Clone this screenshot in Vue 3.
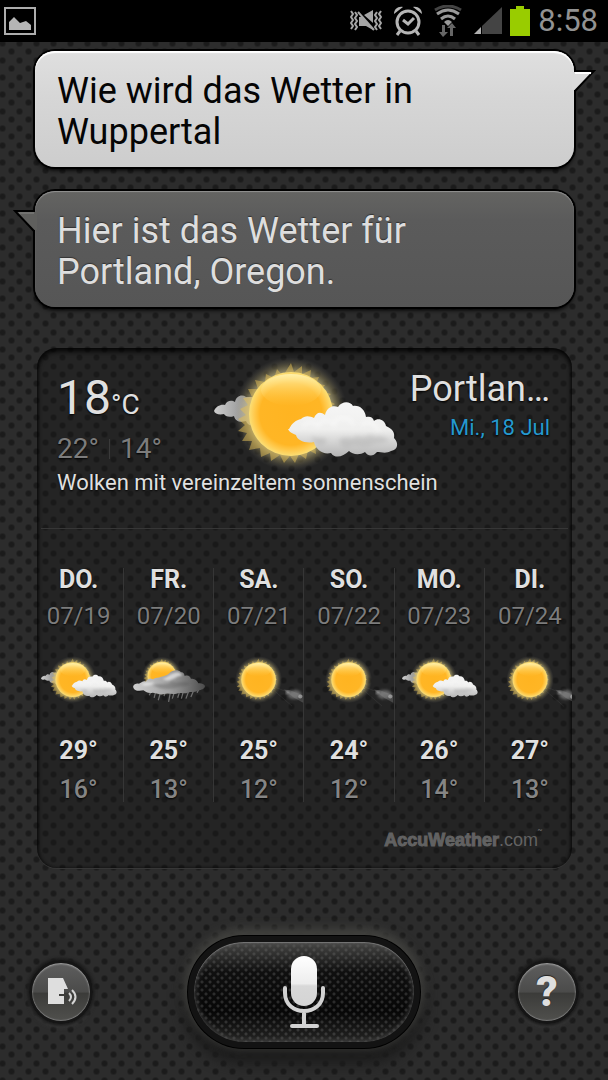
<template>
  <div class="screen">
    <svg class="defs" width="0" height="0" aria-hidden="true">
      <defs>
        <radialGradient id="glow">
          <stop offset="0.7" stop-color="#fff3b0" stop-opacity="0.6"/>
          <stop offset="0.85" stop-color="#e8d58a" stop-opacity="0.25"/>
          <stop offset="1" stop-color="#888" stop-opacity="0"/>
        </radialGradient>
        <radialGradient id="disc">
          <stop offset="0" stop-color="#ffb421"/>
          <stop offset="0.74" stop-color="#ffb625"/>
          <stop offset="0.88" stop-color="#ffcb50"/>
          <stop offset="1" stop-color="#fbdf76"/>
        </radialGradient>
        <linearGradient id="shine" x1="0" y1="0" x2="0" y2="1">
          <stop offset="0" stop-color="#fff3b0" stop-opacity="0.9"/>
          <stop offset="1" stop-color="#ffcf50" stop-opacity="0"/>
        </linearGradient>
        <linearGradient id="white" x1="0" y1="0" x2="0" y2="1">
          <stop offset="0" stop-color="#f6f6f6"/>
          <stop offset="0.5" stop-color="#efefee"/>
          <stop offset="1" stop-color="#b4b4b4"/>
        </linearGradient>
        <linearGradient id="grey" x1="0" y1="0" x2="1" y2="0">
          <stop offset="0" stop-color="#cfcfcf"/>
          <stop offset="1" stop-color="#7e7e7e"/>
        </linearGradient>
        <linearGradient id="rainy" x1="0" y1="0" x2="1" y2="0">
          <stop offset="0" stop-color="#cfcfcf"/>
          <stop offset="0.5" stop-color="#a2a2a2"/>
          <stop offset="1" stop-color="#4b4b4b"/>
        </linearGradient>
        <linearGradient id="mic" x1="0" y1="0" x2="0" y2="1">
          <stop offset="0" stop-color="#fff"/>
          <stop offset="0.55" stop-color="#ededed"/>
          <stop offset="0.6" stop-color="#d8d8d8"/>
          <stop offset="1" stop-color="#d4d4d4"/>
        </linearGradient>
        <filter id="soft" x="-20%" y="-20%" width="140%" height="140%"><feGaussianBlur stdDeviation="2"/></filter>
        <filter id="softer" x="-50%" y="-50%" width="200%" height="200%"><feGaussianBlur stdDeviation="4"/></filter>
      </defs>
      <symbol id="sun" viewBox="0 0 120 120" overflow="visible">
        <circle cx="60" cy="60" r="57" fill="url(#glow)"/>
        <path fill="#e3c058" opacity="0.5" d="M60 9l3 9 8-6 0 8 9-4-1 8 9-1-3 7 9 1-4 6 10 3-6 5 10 5-7 4 8 6-8 4 7 7-9 2 5 9-10 0 3 10-9-2 1 10-8-4-2 9-7-5-4 9-5-7-6 7-4-8-9 6-1-8-9 4-1-9-11 2 3-9-10 0 5-8-9-2 7-6-7-6 8-4-6-6 8-4-5-7 9-1-4-8 10 0-3-9 10 2 1-8 8 4 3-9 6 7z"/>
        <circle cx="60" cy="60" r="42" fill="url(#disc)"/>
        <ellipse cx="60" cy="36" rx="30" ry="16" fill="url(#shine)"/>
      </symbol>
      <symbol id="cloud" viewBox="0 0 108 54" overflow="visible">
        <path fill="url(#white)" d="M0 26c3-6 7-9 12-10 4-4 9-3 13-1 2-5 6-7 11-3 2-8 8-10 13-8 4-6 12-6 15-1 7-1 12 4 13 11 4-1 7 0 8 4 4-4 11-1 12 5 7 3 9 7 8 12 5 5 4 12-3 13-5 3-10 1-14 1-5 6-10 3-12 0-6 4-13 2-16-1-6 6-14 8-18 2-8 2-15-3-17-11-9 2-17-2-18-7-4-2-7-3-8-6z"/>
        <path fill="#a8a8a8" opacity="0.4" filter="url(#soft)" d="M50 37c8-6 13 2 18-5 6 6 13-4 18 2 5-2 10 0 14 3-4 4-12 2-18 5-9 4-15-2-22 2-5 2-9-2-10-7zM22 33c7 4 12 0 16 4-2 5-6 6-9 4-4-1-6-4-7-8z"/>
        <path fill="none" stroke="#fff" stroke-width="2" opacity="0.7" filter="url(#soft)" d="M14 24c5-7 12-5 15-1 5-8 12-6 16-1 2-9 14-10 20 0M72 22c8-6 15 0 18 6"/>
      </symbol>
      <symbol id="partly" viewBox="0 0 216 105" overflow="visible">
        <path fill="url(#grey)" d="M17 51c2-5 7-7 11-6 2-5 7-5 10-3 1-6 7-8 11-5h10v29c-6 0-9-2-10-5-6 2-11 0-12-5-5 2-9 0-10-2-5 1-9 0-10-3z"/>
        <use href="#sun" x="34" y="-6" width="120" height="120"/>
        <use href="#cloud" x="92" y="43" width="108" height="54"/>
      </symbol>
      <symbol id="rain" viewBox="0 0 216 105" overflow="visible">
        <use href="#sun" x="42" y="-4" width="100" height="100"/>
        <path stroke="#909090" stroke-width="3" opacity="0.7" d="M66 82l-5 10M76 86l-3 12M88 86l-5 18M100 84l-3 10M112 86l-4 22M122 84l-5 16M134 86l-4 12M144 82l-5 18M156 84l-6 16M168 82l-6 14M182 76l-5 10"/>
        <path fill="url(#rainy)" d="M22 71c2-7 9-8 14-7 6-2 10-8 17-5 4-7 10-10 17-6 6-4 14-3 20-6 8-1 14-4 19-8 8-8 20-11 29-3 7 0 8 5 9 9 8-3 14 1 15 7 9-2 16 4 18 11 10 0 17 4 16 8-3 8-12 7-18 10-8 5-16 2-22 4-11 5-20-1-29 3-11 3-20-3-30 1-12 3-19-3-28-3-11 2-18-3-22-6-10 2-23 2-25-9z"/>
        <path fill="#eee" opacity="0.7" filter="url(#soft)" d="M93 52c12-2 18-12 28-14 9-4 17 0 20 7-10-2-15 6-22 7-8 5-16 6-26 0zM42 66c12-8 20-3 30-6 0 8-20 12-30 6z"/>
        <path fill="#555" opacity="0.35" filter="url(#soft)" d="M70 68c20-8 30 2 46-10 16 8 28-6 44 6-12 10-24 4-36 10-20 4-34 4-54-6z"/>
      </symbol>
      <symbol id="sunny" viewBox="0 0 216 105" overflow="visible">
        <path stroke="#777" stroke-width="1" opacity="0.35" d="M145 80l44 38M147 72l36 14"/>
        <ellipse cx="195" cy="90" rx="17" ry="11" fill="#aaa" opacity="0.5" filter="url(#softer)"/>
        <path fill="#999" opacity="0.3" d="M168 78l16 2 32 12v18l-22-12z"/>
        <circle cx="178" cy="85" r="4" fill="#bbb" opacity="0.7" filter="url(#soft)"/>
        <circle cx="209" cy="95" r="5" fill="#bbb" opacity="0.6"/>
        <use href="#sun" x="48" y="-6" width="120" height="120"/>
      </symbol>
    </svg>

    <header class="status-bar">
      <svg class="status-picture" width="32" height="28" viewBox="0 0 32 28" role="img" aria-label="Bild">
        <rect x="1" y="1" width="30" height="26" fill="none" stroke="#adadad" stroke-width="2"/>
        <path fill="#b5b5b5" d="M5 23v-8l5-5 6 6 3-1 3-1 5 4v5z"/>
      </svg>
      <div class="status-icons">
        <svg width="32" height="24" viewBox="0 0 32 24" role="img" aria-label="Vibration">
          <path fill="none" stroke="#a5a5a5" stroke-width="2" d="M1 2l2 3-2 3 2 3-2 3 2 3-2 3M5 3l2 3-2 3 2 3-2 3 2 3-2 3M31 2l-2 3 2 3-2 3 2 3-2 3 2 3M27 3l-2 3 2 3-2 3 2 3-2 3 2 3"/>
          <path fill="#a5a5a5" d="M9 8h3l11 11v2l-7-4H9zM14 6l9-5v13z"/>
          <path stroke="#a5a5a5" stroke-width="2" d="M8 3l16 18"/>
        </svg>
        <svg width="28" height="30" viewBox="0 0 28 30" role="img" aria-label="Wecker">
          <circle cx="14" cy="16" r="11" fill="none" stroke="#b5b5b5" stroke-width="3"/>
          <path fill="none" stroke="#b5b5b5" stroke-width="3" d="M9 14l5 4 6-6M6 25l-3 4M22 25l3 4"/>
          <path fill="#b5b5b5" d="M0 8c0-5 4-8 9-7zM28 8c0-5-4-8-9-7z"/>
        </svg>
        <svg width="28" height="32" viewBox="0 0 28 32" role="img" aria-label="WLAN">
          <g fill="none" stroke-width="3">
            <path stroke="#444" d="M1 5q13-8 26 0"/>
            <path stroke="#999" d="M3 9q11-8 22 0"/>
            <path stroke="#999" d="M7 14q7-6 14 0"/>
          </g>
          <path fill="#999" d="M10 17q4-4 8 0l-4 4z"/>
          <path fill="#666" d="M8 20h3v7h3l-5 5-4-5h3zM16 31v-8h-3l5-5 4 5h-3v8z"/>
        </svg>
        <svg width="28" height="28" viewBox="0 0 28 28" role="img" aria-label="Signal">
          <path fill="#444" d="M8 19L28 0v27H8z"/>
          <path fill="#b0b0b0" d="M0 27l7-7v7z"/>
        </svg>
        <svg class="battery" width="20" height="30" viewBox="0 0 20 30" role="img" aria-label="Akku">
          <path fill="#99cc00" d="M6 0h8v3h6v27H0V3h6z"/>
        </svg>
        <span class="clock">8:58</span>
      </div>
    </header>

    <main class="conversation">
      <p class="bubble bubble-user">
        Wie wird das Wetter in Wuppertal
        <svg class="tail tail-right" width="24" height="24" viewBox="0 0 24 24" aria-hidden="true">
          <path fill="#dadada" d="M0 2h21L4 20H0z"/>
          <path fill="none" stroke="#000" stroke-width="2" d="M3 1h19L3 21"/>
          <path stroke="#fff" stroke-width="2" d="M3 3h16"/>
        </svg>
      </p>
      <p class="bubble bubble-reply">
        Hier ist das Wetter für Portland, Oregon.
        <svg class="tail tail-left" width="24" height="24" viewBox="0 0 24 24" aria-hidden="true">
          <path fill="#5f5f5d" d="M24 2H3l17 18h4z"/>
          <path fill="none" stroke="#000" stroke-width="2" d="M21 1H2l19 20"/>
          <path stroke="#858583" stroke-width="1" d="M21 3H6"/>
        </svg>
      </p>

      <section class="card" aria-label="Wetter">
        <div class="today">
          <div class="today-temp">
            <div class="now">18<span class="unit">°C</span></div>
            <div class="range"><span>22°</span><span class="range-line"></span><span>14°</span></div>
          </div>
          <svg class="today-icon" width="190" height="105" viewBox="13 0 190 105" aria-hidden="true">
            <use href="#partly" width="216" height="105"/>
          </svg>
          <div class="today-place">
            <h1 class="city">Portlan…</h1>
            <div class="date">Mi., 18 Jul</div>
          </div>
        </div>
        <p class="description">Wolken mit vereinzeltem sonnenschein</p>

        <ol class="forecast">
          <li v-for="day in days" :key="day.date" class="day">
            <span class="day-name">{{ day.name }}</span>
            <span class="day-date">{{ day.date }}</span>
            <svg class="day-icon" viewBox="0 0 216 105" aria-hidden="true">
              <use :href="'#' + day.icon" width="216" height="105"/>
            </svg>
            <span class="day-high">{{ day.high }}°</span>
            <span class="day-low">{{ day.low }}°</span>
          </li>
        </ol>
        <div class="brand"><b>AccuWeather</b><span>.com</span><sup>˜</sup></div>
      </section>
    </main>

    <footer class="controls">
      <button class="round" type="button" aria-label="Sprachausgabe">
        <svg width="32" height="30" viewBox="0 0 32 30" aria-hidden="true">
          <path fill="#dedede" d="M3 1h15l5 11h-4v5h-5v2h5v8H3z"/>
          <path fill="none" stroke="#d5d5d5" stroke-width="2" d="M24 16q4 4 0 8M27 13q7 7 0 14"/>
        </svg>
      </button>
      <button class="mic" type="button" aria-label="Sprechen">
        <svg width="42" height="74" viewBox="0 0 42 74" aria-hidden="true">
          <rect x="8" y="1" width="26" height="50" rx="13" fill="url(#mic)"/>
          <path fill="none" stroke="#d2d2d2" stroke-width="4" stroke-linecap="round" d="M2 33v5c0 24 38 24 38 0v-5M21 57v13M9 71h25"/>
        </svg>
      </button>
      <button class="round help" type="button" aria-label="Hilfe">?</button>
    </footer>
  </div>
</template>

<script setup>
const days = [
  { name: 'DO.', date: '07/19', icon: 'partly', high: 29, low: 16 },
  { name: 'FR.', date: '07/20', icon: 'rain', high: 25, low: 13 },
  { name: 'SA.', date: '07/21', icon: 'sunny', high: 25, low: 12 },
  { name: 'SO.', date: '07/22', icon: 'sunny', high: 24, low: 12 },
  { name: 'MO.', date: '07/23', icon: 'partly', high: 26, low: 14 },
  { name: 'DI.', date: '07/24', icon: 'sunny', high: 27, low: 13 }
]
</script>

<style>
body { margin:0; background:#2b2b2b; }
</style>

<style scoped>
.screen {
  min-height:100vh; display:flex; flex-direction:column; overflow:hidden;
  font-family:Roboto, "Noto Sans", sans-serif; color:#e0e0e0;
  background-color:#2c2c2c;
  background-image:
    radial-gradient(circle, #1b1b1b 2px, transparent 4px),
    radial-gradient(circle, #1b1b1b 2px, transparent 4px);
  background-size:17px 17px;
  background-position:-6px 1px, 3px 9px;
}
.defs { position:absolute; }
.status-bar { height:42px; background:#000; display:flex; align-items:center; justify-content:space-between; padding:0 10px 0 4px; }
.status-icons { display:flex; align-items:center; gap:12px; }
.battery { margin-left:-4px; }
.clock { font-size:31px; line-height:42px; color:#929292; margin-left:-4px; }

.conversation { flex:1; padding:9px 34px 0 35px; }
.bubble { position:relative; margin:0 0 24px; padding:20px 140px 14px 22px; border-radius:20px; font-size:36px; line-height:41px; }
.bubble-user { color:#050505; background:linear-gradient(#dfdfdf, #d6d6d6 40%, #cdcdcd); box-shadow:0 0 0 2px #000, inset 0 2px 1px #fff, 0 3px 4px #000; }
.bubble-reply { color:#dedede; background:linear-gradient(#646462, #5b5b5b 25%, #565656); box-shadow:0 0 0 2px #000, inset 0 1px 1px #929292, 0 3px 4px #000; text-shadow:0 -1px 1px #333; }
.tail { position:absolute; top:19px; }
.tail-right { right:-22px; }
.tail-left { left:-22px; }

.card {
  margin:41px 2px 0; padding-bottom:14px; border-radius:20px; overflow:hidden;
  background:rgba(24,24,24,0.35);
  box-shadow:inset 0 4px 5px rgba(0,0,0,0.75), inset 2px 0 3px rgba(0,0,0,0.35), inset -2px 0 3px rgba(0,0,0,0.35), 0 1px 0 #363636;
}
.today { display:flex; justify-content:space-between; padding:12px 22px 0 20px; text-shadow:0 1px 2px #000; }
.today-temp { width:153px; padding-top:10px; }
.now { font-size:48px; line-height:56px; }
.unit { font-size:28px; }
.range { display:flex; align-items:center; font-size:28px; line-height:32px; color:#7c7c7c; }
.range-line { width:1px; height:20px; margin:0 10px; background:#3a3a3a; }
.today-icon { flex:none; overflow:visible; }
.today-place { flex:1; padding-top:8px; text-align:right; white-space:nowrap; }
.city { margin:0; font-size:36px; line-height:42px; font-weight:400; }
.date { font-size:22px; line-height:36px; color:#2599cf; }
.description { margin:3px 4px 0; padding:0 16px 30px; font-size:22px; line-height:30px; border-bottom:1px solid #363636; text-shadow:0 1px 2px #000; }

.forecast { list-style:none; margin:39px -3px 0; padding:0; display:grid; grid-template-columns:repeat(6, 1fr); }
.day { display:flex; flex-direction:column; align-items:center; border-right:1px solid #363636; font-size:25px; line-height:28px; text-shadow:0 1px 2px #000; }
.day:last-child { border-right:0; }
.day-name { font-weight:700; line-height:24px; margin-bottom:10px; }
.day-date { font-size:24px; color:#7c7c7c; }
.day-icon { flex:none; width:100%; height:44px; margin:27px 0 36px; overflow:visible; }
.day-high { font-weight:700; margin-bottom:13px; }
.day-low { line-height:24px; color:#858585; font-weight:500; }
.brand { margin:24px 30px 0; text-align:right; font-family:"Liberation Sans", Arial, sans-serif; font-size:18px; line-height:28px; color:#626262; }
.brand b { -webkit-text-stroke:1px #626262; }
.brand sup { font-size:12px; line-height:1px; }

.controls { display:flex; align-items:center; justify-content:space-between; padding:0 29px 32px 29px; }
button { border:0; padding:0; font-family:inherit; cursor:pointer; display:flex; align-items:center; justify-content:center; }
.round {
  width:64px; height:64px; border-radius:50%; border:3px solid #151515;
  background:linear-gradient(#5e5e5e, #4b4b4a 50%, #3b3b39 52%, #50504d);
  box-shadow:inset 0 1px 2px #aaa, inset 0 -1px 1px #777, 0 0 3px 2px #1b1b1b, 0 3px 4px #444;
}
.help { font-size:42px; line-height:48px; font-weight:900; color:#dedede; text-shadow:0 -1px 1px #222; }
.mic {
  width:232px; height:112px; border-radius:56px; border:6px solid #131313;
  background:
    linear-gradient(rgba(90,90,88,0.75), rgba(20,20,20,0.4) 30%, rgba(0,0,0,0.4) 70%, rgba(60,60,58,0.5)),
    radial-gradient(circle, #444 1px, transparent 2px) 0 0 / 8px 8px,
    radial-gradient(circle, #444 1px, transparent 2px) 4px 4px / 8px 8px,
    #0c0c0c;
  box-shadow:inset 0 1px 1px #777, inset 0 0 6px #555, 0 0 0 1px #000, 0 -4px 10px 4px #42423f, 0 10px 14px 6px #1c1c1c;
}
</style>
